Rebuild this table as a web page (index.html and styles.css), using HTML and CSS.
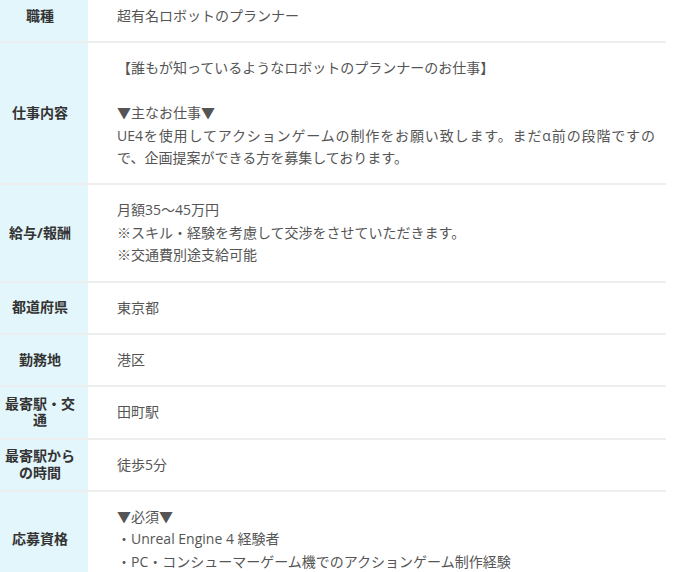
FILE: index.html
```html
<!DOCTYPE html>
<html lang="ja">
<head>
  <meta charset="UTF-8">
  <title>求人詳細</title>
  <link rel="stylesheet" href="styles.css">
</head>
<body>
  <table class="job-table">
    <tr>
      <th>職種</th>
      <td>超有名ロボットのプランナー</td>
    </tr>
    <tr>
      <th>仕事内容</th>
      <td>【誰もが知っているようなロボットのプランナーのお仕事】<br><br>▼主なお仕事▼<br><span class="line-fill">UE4を使用してアクションゲームの制作をお願い致します。まだα前の段階ですの</span>で、企画提案ができる方を募集しております。</td>
    </tr>
    <tr>
      <th>給与/報酬</th>
      <td>月額35〜45万円<br>※スキル・経験を考慮して交渉をさせていただきます。<br>※交通費別途支給可能</td>
    </tr>
    <tr>
      <th>都道府県</th>
      <td>東京都</td>
    </tr>
    <tr>
      <th>勤務地</th>
      <td>港区</td>
    </tr>
    <tr>
      <th>最寄駅・交通</th>
      <td>田町駅</td>
    </tr>
    <tr>
      <th>最寄駅からの時間</th>
      <td>徒歩5分</td>
    </tr>
    <tr>
      <th>応募資格</th>
      <td>▼必須▼<br>・Unreal Engine 4 経験者<br>・PC・コンシューマーゲーム機でのアクションゲーム制作経験</td>
    </tr>
  </table>
</body>
</html>
```

FILE: styles.css
```css
/* Job detail table */
body {
  margin: 0;
  background-color: #fff;
  font-family: "Open Sans", "Noto Sans CJK JP", sans-serif;
}

.job-table {
  width: 666px;
  margin-top: -9px; /* page is scrolled a little */
  border-collapse: collapse;
  table-layout: fixed;
}

.job-table tr {
  border-bottom: 2px solid #eeeeee;
}

.job-table th {
  width: 72px;
  padding: 4px 12px 4px 4px;
  background-color: #e3f6fb;
  color: #333;
  font-size: 14px;
  font-weight: 700;
  line-height: 1.2;
  text-align: center;
  vertical-align: middle;
}

.job-table td {
  padding: 14px 11px 14px 29px;
  color: #555;
  font-size: 14px;
  line-height: 1.6;
  text-align: justify;
  vertical-align: top;
}

/* first line of a long paragraph, spread to the full width */
.line-fill {
  display: block;
  text-align-last: justify;
}
```
